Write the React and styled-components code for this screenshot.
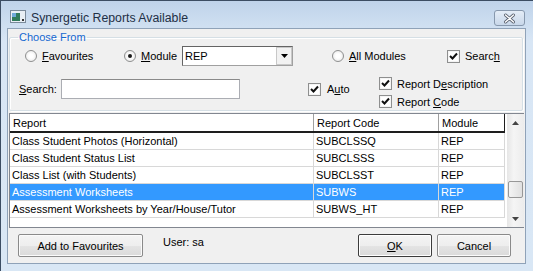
import React from 'react';
import styled, { createGlobalStyle } from 'styled-components';

const Global = createGlobalStyle`
  html, body { margin: 0; padding: 0; background: #fff; }
  body { font-family: "Liberation Sans", Arial, sans-serif; font-size: 11px; color: #000; }
  * { box-sizing: border-box; }
`;

const Window = styled.div`
  width: 533px;
  height: 271px;
  background: linear-gradient(#bfd3ea, #d8e6f5 40px, #d9e7f5);
  border-top: 1px solid #3c4d63;
  border-left: 1px solid #3c4d63;
  display: flex;
  flex-direction: column;
`;

const TitleBar = styled.div`
  height: 27px;
  display: flex;
  align-items: center;
  padding: 5px 8px 0 9px;
  gap: 5px;
`;

const Title = styled.div`
  flex: 1;
  font-family: "Liberation Sans", Arial, sans-serif;
  font-size: 12.3px;
  color: #1e2f45;
  padding-top: 1px;
`;

const CloseBtn = styled.div`
  width: 31px;
  height: 16px;
  margin-top: 2px;
  border: 1px solid #8798ad;
  border-radius: 3px;
  background: linear-gradient(#e4edf7, #c9d8ea);
  display: flex;
  align-items: center;
  justify-content: center;
`;

const Client = styled.div`
  height: 236px;
  margin: 0 7px 0 6px;
  background: #f0f0f0;
  border: 1px solid #8fa2b8;
  display: flex;
  flex-direction: column;
  padding: 3px 1px 0 1px;
`;

const Group = styled.fieldset`
  margin: 0 1px 0 0;
  padding: 0;
  height: 79px;
  min-width: 0;
  border: 1px solid #d5dfe5;
  box-shadow: inset 1px 1px 0 #fff, 1px 1px 0 #fff;
  border-radius: 2px;
  display: flex;
  flex-direction: column;
`;

const Legend = styled.legend`
  color: #1568d0;
  padding: 0 1px;
  margin-left: 8px;
  font-size: 11px;
  line-height: 10px;
`;

const Row = styled.div`
  display: flex;
  align-items: center;
  height: ${p => p.$h}px;
  margin-top: ${p => p.$mt || 0}px;
  padding-left: ${p => p.$pl || 0}px;
`;

const Opt = styled.label`
  display: flex;
  align-items: center;
  gap: ${p => p.$gap || 5}px;
  width: ${p => p.$w ? p.$w + 'px' : 'auto'};
  flex-shrink: 0;
`;

const RadioDot = styled.span`
  width: 12px;
  height: 12px;
  border-radius: 50%;
  border: 1px solid #8e8f8f;
  background: radial-gradient(circle, #fff 30%, #e2e2e2 100%);
  display: flex;
  align-items: center;
  justify-content: center;
  &::after {
    content: '';
    width: 4px;
    height: 4px;
    border-radius: 50%;
    background: ${p => p.$on ? '#1a1a1a' : 'transparent'};
  }
`;

const Check = styled.span`
  width: 13px;
  height: 13px;
  border: 1px solid #8e8f8f;
  box-shadow: inset 0 0 0 1px #f4f4f4;
  background: #fff;
  display: flex;
  align-items: center;
  justify-content: center;
`;

const Select = styled.div`
  width: 111px;
  height: 20px;
  border: 1px solid #a0a0a0;
  border-top-color: #646464;
  border-left-color: #646464;
  background: #fff;
  display: flex;
  align-items: center;
  padding-left: 2px;
  margin-right: 39px;
  flex-shrink: 0;
`;

const SelVal = styled.div`
  flex: 1;
`;

const DropBtn = styled.div`
  width: 16px;
  height: 18px;
  border: 1px solid #c8c8c8;
  background: #f2f2f2;
  display: flex;
  align-items: center;
  justify-content: center;
`;

const SearchLabel = styled.span`
  width: 42px;
  flex-shrink: 0;
`;

const TextBox = styled.div`
  width: 179px;
  height: 20px;
  border: 1px solid #abadb3;
  border-top-color: #8a8a8a;
  background: #fff;
  margin-right: 68px;
  flex-shrink: 0;
`;

const SideChecks = styled.div`
  display: flex;
  flex-direction: column;
  gap: 5px;
  margin-top: 7px;
`;

const U = styled.span`
  text-decoration: underline;
`;

const ListWrap = styled.div`
  margin-top: 2px;
  height: 115px;
  display: flex;
  border: 1px solid #828790;
  border-right: none;
  background: #fff;
`;

const Table = styled.div`
  flex: 1;
  display: flex;
  flex-direction: column;
`;

const cols = '304px 125px 65px';

const Header = styled.div`
  display: grid;
  grid-template-columns: ${cols};
  height: 19px;
  border-bottom: 2px solid #1e1e1e;
  width: 495px;
  border-right: 1px solid #1e1e1e;
`;

const HCell = styled.div`
  padding-left: 3px;
  display: flex;
  align-items: center;
  border-right: 1px solid #a0a0a0;
  &:last-child { border-right: none; }
`;

const DataRow = styled.div`
  display: grid;
  grid-template-columns: ${cols};
  height: 17px;
  width: 495px;
  background: ${p => p.$sel ? '#3399ff' : '#fff'};
  color: ${p => p.$sel ? '#fff' : '#000'};
  border-bottom: 1px solid #d8d8d8;
  border-right: 1px solid #d8d8d8;
`;

const Cell = styled.div`
  padding-left: 2px;
  display: flex;
  align-items: center;
  border-right: 1px solid #d8d8d8;
  &:last-child { border-right: none; }
  white-space: nowrap;
  overflow: hidden;
`;

const ScrollBar = styled.div`
  width: 17px;
  background: linear-gradient(90deg, #e6e6e6, #f5f5f5 40%, #ececec);
  display: flex;
  flex-direction: column;
  align-items: center;
`;

const Arrow = styled.div`
  height: 17px;
  display: flex;
  align-items: center;
  justify-content: center;
`;

const Track = styled.div`
  flex: 1;
  width: 100%;
  display: flex;
  flex-direction: column;
  padding-top: 50px;
`;

const Thumb = styled.div`
  height: 17px;
  margin: 0 1px;
  border: 1px solid #979797;
  border-radius: 2px;
  background: linear-gradient(90deg, #f4f4f4, #e0e0e0);
`;

const Footer = styled.div`
  flex: 1;
  display: flex;
  align-items: flex-start;
  padding: 6px 13px 0 9px;
`;

const Button = styled.div`
  width: ${p => p.$w}px;
  height: 23px;
  border: 1px solid ${p => p.$def ? '#3c3c3c' : '#8a8a8a'};
  box-shadow: inset 0 0 0 1px ${p => p.$def ? '#fff' : '#fbfbfb'};
  border-radius: 2px;
  background: linear-gradient(#f4f4f4, #eeeeee 50%, #e4e4e4 51%, #dadada);
  display: flex;
  align-items: center;
  justify-content: center;
  margin-left: ${p => p.$ml || 0}px;
  flex-shrink: 0;
`;

const UserText = styled.div`
  margin-left: 20px;
  margin-top: 2px;
  flex: 1;
`;

const CheckMark = () => (
  <svg width="9" height="9" viewBox="0 0 9 9">
    <path d="M1 4 L3.5 6.5 L8 1.5" fill="none" stroke="#111" strokeWidth="2" />
  </svg>
);

const rows = [
  ['Class Student Photos (Horizontal)', 'SUBCLSSQ', 'REP'],
  ['Class Student Status List', 'SUBCLSSS', 'REP'],
  ['Class List (with Students)', 'SUBCLSST', 'REP'],
  ['Assessment Worksheets', 'SUBWS', 'REP', true],
  ['Assessment Worksheets by Year/House/Tutor', 'SUBWS_HT', 'REP'],
];

export default function App() {
  return (
    <>
      <Global />
      <Window>
        <TitleBar>
          <svg width="16" height="16" viewBox="0 0 16 16">
            <rect x="0.5" y="1.5" width="15" height="12" fill="#e8eef4" stroke="#7a8a9a" />
            <rect x="2" y="4" width="8" height="8" fill="#2f7a5a" />
            <rect x="2" y="4" width="4" height="4" fill="#6fa8d8" />
            <rect x="12" y="10" width="2" height="2" fill="#333" />
          </svg>
          <Title>Synergetic Reports Available</Title>
          <CloseBtn>
            <svg width="13" height="11" viewBox="0 0 13 11">
              <path d="M2.5 2 L10.5 9 M10.5 2 L2.5 9" stroke="#5a6270" strokeWidth="3" strokeLinecap="round" />
              <path d="M2.5 2 L10.5 9 M10.5 2 L2.5 9" stroke="#fff" strokeWidth="1.4" strokeLinecap="round" />
            </svg>
          </CloseBtn>
        </TitleBar>
        <Client>
          <Group>
            <Legend>Choose From</Legend>
            <Row $h={22} $mt={3} $pl={15}>
              <Opt $w={99}><RadioDot /><span><U>F</U>avourites</span></Opt>
              <Opt $w={58}><RadioDot $on /><span><U>M</U>odule</span></Opt>
              <Select>
                <SelVal>REP</SelVal>
                <DropBtn>
                  <svg width="7" height="4" viewBox="0 0 7 4"><path d="M0 0 H7 L3.5 4 Z" fill="#000" /></svg>
                </DropBtn>
              </Select>
              <Opt $w={115}><RadioDot /><span><U>A</U>ll Modules</span></Opt>
              <Opt><Check><CheckMark /></Check><span>Searc<U>h</U></span></Opt>
            </Row>
            <Row $h={24} $mt={10} $pl={9}>
              <SearchLabel><U>S</U>earch:</SearchLabel>
              <TextBox />
              <Opt $w={71} $gap={6}><Check><CheckMark /></Check><span>A<U>u</U>to</span></Opt>
              <SideChecks>
                <Opt><Check><CheckMark /></Check><span>Report D<U>e</U>scription</span></Opt>
                <Opt><Check><CheckMark /></Check><span>Report <U>C</U>ode</span></Opt>
              </SideChecks>
            </Row>
          </Group>
          <ListWrap>
            <Table>
              <Header>
                <HCell>Report</HCell>
                <HCell>Report Code</HCell>
                <HCell>Module</HCell>
              </Header>
              {rows.map(r => (
                <DataRow key={r[1]} $sel={r[3]}>
                  <Cell>{r[0]}</Cell>
                  <Cell>{r[1]}</Cell>
                  <Cell>{r[2]}</Cell>
                </DataRow>
              ))}
            </Table>
            <ScrollBar>
              <Arrow>
                <svg width="7" height="4" viewBox="0 0 7 4"><path d="M0 4 H7 L3.5 0 Z" fill="#444" /></svg>
              </Arrow>
              <Track><Thumb /></Track>
              <Arrow>
                <svg width="7" height="4" viewBox="0 0 7 4"><path d="M0 0 H7 L3.5 4 Z" fill="#444" /></svg>
              </Arrow>
            </ScrollBar>
          </ListWrap>
          <Footer>
            <Button $w={125}>Add to Favourites</Button>
            <UserText>User: sa</UserText>
            <Button $w={74} $def><span><U>O</U>K</span></Button>
            <Button $w={74} $ml={5}>Cancel</Button>
          </Footer>
        </Client>
      </Window>
    </>
  );
}
